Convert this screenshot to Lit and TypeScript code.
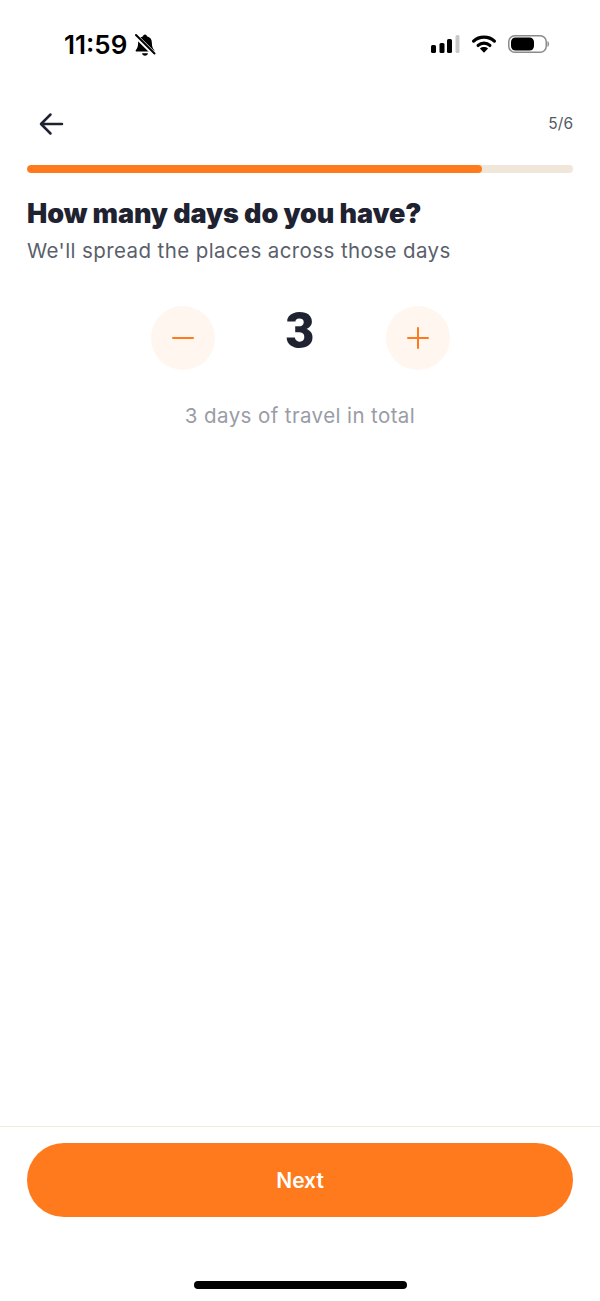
import { LitElement, html, css } from 'lit';
import { customElement, state } from 'lit/decorators.js';

@customElement('app-root')
export class AppRoot extends LitElement {
  static styles = css`
    :host {
      display: block;
      width: 600px;
      height: 1301px;
      background: #fff;
      font-family: Inter, 'Liberation Sans', sans-serif;
      color: #1f2230;
    }
    .screen {
      display: flex;
      flex-direction: column;
      height: 1301px;
      overflow: hidden;
    }
    .status {
      display: flex;
      align-items: center;
      justify-content: space-between;
      height: 30px;
      padding: 30px 51px 0 64px;
      flex: none;
    }
    .status-left,
    .status-right {
      display: flex;
      align-items: center;
    }
    .status-left {
      gap: 7px;
    }
    .status-right {
      gap: 11px;
      padding-bottom: 2px;
    }
    .time {
      font-size: 26px;
      font-weight: 600;
      line-height: 30px;
      color: #000;
    }
    svg {
      display: block;
    }
    .top {
      display: flex;
      align-items: center;
      justify-content: space-between;
      height: 30px;
      margin-top: 49px;
      padding: 0 27px 0 38px;
    }
    .back {
      padding: 0;
      border: none;
      background: none;
    }
    .count {
      font-size: 15.5px;
      line-height: 20px;
      color: #555966;
    }
    .track {
      height: 8px;
      margin: 26px 27px 0;
      border-radius: 4px;
      background: #f0e6da;
      overflow: hidden;
    }
    .fill {
      height: 100%;
      border-radius: 4px;
      background: #ff7a1c;
    }
    h1 {
      margin: 24px 27px 0;
      font-size: 27px;
      line-height: 34px;
      font-weight: 900;
      color: #1f2230;
      letter-spacing: -0.1px;
    }
    .sub {
      margin: 6px 27px 0;
      font-size: 20.5px;
      line-height: 28px;
      color: #5b5f6c;
      letter-spacing: 0.4px;
    }
    .stepper {
      display: flex;
      justify-content: center;
      align-items: flex-start;
      margin-top: 41px;
    }
    .round {
      display: flex;
      align-items: center;
      justify-content: center;
      width: 64px;
      height: 64px;
      padding: 0;
      border: none;
      border-radius: 50%;
      background: #fff7ef;
    }
    .value {
      width: 171px;
      font-family: Roboto, Inter, sans-serif;
      font-size: 50px;
      line-height: 50px;
      font-weight: 900;
      text-align: center;
      color: #1f2230;
    }
    .total {
      margin-top: 32px;
      font-size: 20.5px;
      line-height: 28px;
      text-align: center;
      color: #999ca6;
      letter-spacing: 0.4px;
    }
    .spacer {
      flex: 1;
    }
    .footer {
      flex: none;
      height: 175px;
      padding-top: 16px;
      box-sizing: border-box;
      border-top: 1px solid #f2ecdf;
    }
    .next {
      display: block;
      width: 546px;
      height: 74px;
      margin: 0 27px;
      padding: 0;
      border: none;
      border-radius: 37px;
      background: #ff7a1c;
      color: #fff;
      font-family: inherit;
      font-size: 21px;
      font-weight: 600;
    }
    .home {
      width: 213px;
      height: 8px;
      margin: 64px auto 0;
      border-radius: 4px;
      background: #000;
    }
  `;

  @state()
  days = 3;

  @state()
  step = 5;

  private _dec() {
    if (this.days > 1) this.days--;
  }

  private _inc() {
    this.days++;
  }

  render() {
    const pct = (this.step / 6) * 100;
    return html`
      <div class="screen">
        <div class="status">
          <div class="status-left">
            <span class="time">11:59</span>
            <svg width="22" height="24" viewBox="0 0 22 24">
              <path d="M11 1.500c1.100 0 1.800.8 1.900 1.700 3.300.7 5 3.400 5 6.700 0 3.600.9 5.600 2.200 7 .6.7.2 1.600-.7 1.600H2.600c-.9 0-1.300-.9-.7-1.600 1.300-1.400 2.200-3.400 2.200-7 0-3.300 1.700-6 5-6.700.1-.9.8-1.700 1.900-1.700z" fill="#000" />
              <path d="M8 20.300h6c-.2 1.500-1.400 2.500-3 2.500s-2.800-1-3-2.500z" fill="#000" />
              <path d="M1.500 2.500 20.500 21.500" stroke="#fff" stroke-width="4.500" />
              <path d="M2 2 20.500 20.500" stroke="#000" stroke-width="2" stroke-linecap="round" />
            </svg>
          </div>
          <div class="status-right">
            <svg width="30" height="18" viewBox="0 0 30 18">
              <rect x="1" y="10" width="5" height="8" rx="1.500" fill="#000" />
              <rect x="9.500" y="8" width="5" height="10" rx="1.500" fill="#000" />
              <rect x="17" y="4" width="5" height="14" rx="1.500" fill="#000" />
              <rect x="25.500" y="0" width="4" height="18" rx="1.500" fill="#c9c9c9" />
            </svg>
            <svg width="26" height="18" viewBox="0 0 26 19">
              <path d="M2 6.500C8 .8 18 .8 24 6.500" fill="none" stroke="#000" stroke-width="3.400" stroke-linecap="round" />
              <path d="M6.800 11C10.300 7.800 15.700 7.800 19.200 11" fill="none" stroke="#000" stroke-width="3.400" stroke-linecap="round" />
              <path d="M8.700 14.300C11.200 12.200 14.800 12.200 17.300 14.300L13 18.800z" fill="#000" />
            </svg>
            <svg width="41" height="18" viewBox="0 0 41 18">
              <rect x=".75" y=".75" width="37.500" height="16.500" rx="6" fill="none" stroke="#8a8a8a" stroke-width="1.500" />
              <rect x="3" y="2.500" width="23" height="13" rx="4.500" fill="#000" />
              <path d="M39.500 6v6c1-.5 1.500-1.600 1.500-3s-.5-2.500-1.500-3z" fill="#8a8a8a" />
            </svg>
          </div>
        </div>

        <div class="top">
          <button class="back" aria-label="Back">
            <svg width="26" height="26" viewBox="0 0 26 26">
              <path d="M24 13H3M12.500 3.500 3 13l9.500 9.500" fill="none" stroke="#1f2230" stroke-width="2.500" stroke-linecap="round" stroke-linejoin="round" />
            </svg>
          </button>
          <span class="count">${this.step}/6</span>
        </div>

        <div class="track">
          <div class="fill" style="width: ${pct}%"></div>
        </div>

        <h1>How many days do you have?</h1>
        <div class="sub">We'll spread the places across those days</div>

        <div class="stepper">
          <button class="round" aria-label="Fewer days" @click=${this._dec}>
            <svg width="24" height="24" viewBox="0 0 24 24">
              <path d="M2 12h20" stroke="#ff7a1c" stroke-width="2" stroke-linecap="round" />
            </svg>
          </button>
          <div class="value">${this.days}</div>
          <button class="round" aria-label="More days" @click=${this._inc}>
            <svg width="24" height="24" viewBox="0 0 24 24">
              <path d="M2 12h20M12 2v20" stroke="#ff7a1c" stroke-width="2" stroke-linecap="round" />
            </svg>
          </button>
        </div>

        <div class="total">${this.days} days of travel in total</div>

        <div class="spacer"></div>

        <div class="footer">
          <button class="next">Next</button>
          <div class="home"></div>
        </div>
      </div>
    `;
  }
}
